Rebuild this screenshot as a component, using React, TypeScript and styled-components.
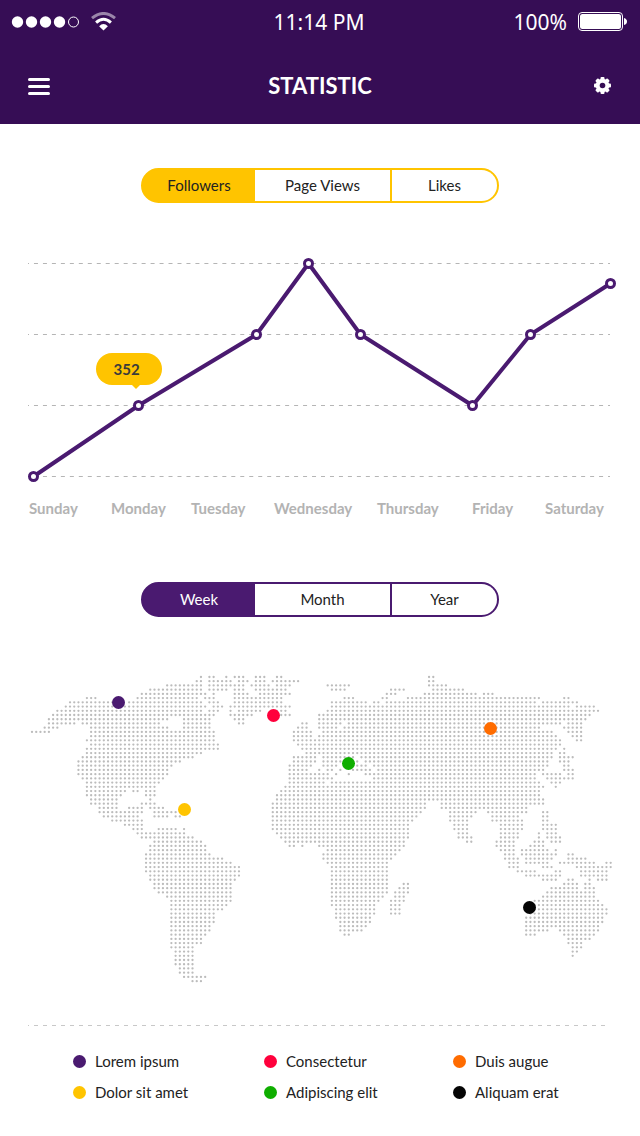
import React, { useState } from "react";
import styled, { createGlobalStyle } from "styled-components";

const color = {
  header: "#360d55",
  purple: "#4a1a70",
  yellow: "#ffc400",
  red: "#ff003c",
  green: "#0fae00",
  orange: "#ff6c00",
  black: "#050505",
  text: "#222222",
  muted: "#b3b3b3",
};

const GlobalStyle = createGlobalStyle`
  *, *::before, *::after { box-sizing: border-box; }
  body {
    margin: 0;
    background: #fff;
    color: ${color.text};
    font-family: Lato, "Open Sans", sans-serif;
    font-size: 15px;
    line-height: 20px;
  }
`;

const Page = styled.div`
  display: flex;
  flex-direction: column;
  padding-bottom: 34px;
`;

const Header = styled.header`
  background: ${color.header};
  color: #fff;
`;

const StatusBar = styled.div`
  display: grid;
  grid-template-columns: 1fr auto 1fr;
  align-items: center;
  height: 43px;
  padding: 0 13px 0 11px;
  font-family: "Noto Sans", "Open Sans", sans-serif;
  font-size: 21px;
  line-height: 28px;
`;

const StatusGroup = styled.div<{ $end?: boolean }>`
  display: flex;
  align-items: center;
  justify-content: ${(p) => (p.$end ? "flex-end" : "flex-start")};
  gap: 11px;
`;

const NavBar = styled.nav`
  display: grid;
  grid-template-columns: 1fr auto 1fr;
  align-items: center;
  height: 81px;
  padding: 5px 28px 0;
`;

const Title = styled.h1`
  margin: 0;
  font-size: 22px;
  line-height: 28px;
  font-weight: 700;
`;

const IconButton = styled.button<{ $end?: boolean }>`
  display: flex;
  justify-self: ${(p) => (p.$end ? "end" : "start")};
  padding: 0;
  border: 0;
  background: none;
  color: inherit;
  cursor: pointer;
`;

const Segments = styled.div<{ $tone: string }>`
  display: grid;
  grid-template-columns: 112fr 137fr 105fr;
  align-self: center;
  width: 358px;
  max-width: 100%;
  height: 35px;
  border: 2px solid ${(p) => p.$tone};
  border-radius: 18px;
  background: ${(p) => p.$tone};
  overflow: hidden;
`;

const Segment = styled.button<{ $tone: string; $ink: string }>`
  padding: 0 0 2px;
  border: 0;
  border-right: 2px solid ${(p) => p.$tone};
  background: #fff;
  color: ${color.text};
  font: inherit;
  cursor: pointer;
  &:last-child { border-right: 0; }
  &[aria-pressed="true"] {
    border-right: 0;
    background: ${(p) => p.$tone};
    color: ${(p) => p.$ink};
  }
`;

const ChartSection = styled.section`
  display: flex;
  flex-direction: column;
  padding: 44px 24px 0;
`;

const ChartArea = styled.div`
  position: relative;
  margin-top: 53px;
`;

const Drawing = styled.svg`
  display: block;
  width: 100%;
  height: auto;
`;

const Tooltip = styled.div`
  position: absolute;
  left: 18%;
  bottom: 99px;
  width: 66px;
  height: 32px;
  margin-left: -35px;
  padding-right: 4px;
  border-radius: 16px;
  background: ${color.yellow};
  color: #3b3b3b;
  font-weight: 700;
  line-height: 32px;
  text-align: center;
  &::after {
    content: "";
    position: absolute;
    left: 36px;
    top: 100%;
    border: 4px solid transparent;
    border-top-color: ${color.yellow};
    border-bottom: 0;
  }
`;

const Days = styled.ol`
  display: grid;
  grid-template-columns: 82fr 80fr 83fr 103fr 95fr 73fr 71fr;
  margin: 14px 0 0;
  padding: 0 0 0 5px;
  list-style: none;
  color: ${color.muted};
  font-weight: 700;
`;

const MapSection = styled.section`
  display: flex;
  flex-direction: column;
  padding: 64px 28px 0;
`;

const MapArea = styled.div`
  margin-top: 57px;
`;

const Divider = styled.hr`
  align-self: stretch;
  height: 1px;
  margin: 40px 2px 0 0;
  border: 0;
  background: repeating-linear-gradient(90deg, #c8c8c8 0 1px, transparent 1px 6px, #c8c8c8 6px 9px);
`;

const Legend = styled.ul`
  display: grid;
  grid-template-columns: 191fr 189fr 159fr;
  row-gap: 11px;
  margin: 25px 0 0;
  padding: 0 0 0 45px;
  list-style: none;
`;

const LegendItem = styled.li<{ $tone: string }>`
  display: flex;
  align-items: center;
  gap: 9px;
  &::before {
    content: "";
    width: 13px;
    height: 13px;
    border-radius: 50%;
    background: ${(p) => p.$tone};
  }
`;

function SegmentedControl({ label, options, tone, ink }: { label: string; options: string[]; tone: string; ink: string }) {
  const [active, setActive] = useState(options[0]);
  return (
    <Segments role="group" aria-label={label} $tone={tone}>
      {options.map((o) => (
        <Segment key={o} type="button" $tone={tone} $ink={ink} aria-pressed={o === active} onClick={() => setActive(o)}>
          {o}
        </Segment>
      ))}
    </Segments>
  );
}

const points = [
  [33.5, 476.5],
  [138.5, 405.5],
  [256.5, 334.5],
  [308.5, 263.5],
  [360.5, 334.5],
  [472.5, 405.5],
  [530.5, 334.5],
  [610.5, 283.5],
];

function LineChart() {
  return (
    <Drawing viewBox="24 256 592 228" role="img" aria-label="Followers per day">
      {[263.5, 334.5, 405.5, 476.5].map((y) => (
        <line key={y} x1="28" x2="610" y1={y} y2={y} stroke="#b5b5b5" strokeDasharray="4 4.970" strokeDashoffset="3" />
      ))}
      <polyline points={points.map((p) => p.join(",")).join(" ")} fill="none" stroke={color.purple} strokeWidth="4" />
      {points.map(([x, y]) => (
        <circle key={x} cx={x} cy={y} r="4" fill="#fff" stroke={color.purple} strokeWidth="3" />
      ))}
    </Drawing>
  );
}

// Land cells of the dotted world map: one string per row, each a list of column ranges.
const land = [
  "40,42-43,46,48-50,53-55,58-59,94-95",
  "39-40,42-47,49-51,53-55,57-63,94-95",
  "32-40,42-44,45-50,52-56,58-61,70-75,94-98",
  "28-40,42-46,48-50,53-60,71-74,85-88,95-102",
  "26-41,43,48-51,54-61,84-86,93-105,107-109",
  "13-15,25-39,41-43,48-59,74-76,83-84,89-120,126-127",
  "9-20,23-40,42-44,48-59,71-79,81-82,84-119,121-129",
  "8-41,43-45,47-61,71-127,129-133",
  "6-40,42-44,47,49-54,57-60,70-126,127-134",
  "5-43,47-52,58-61,68-132",
  "4-32,36-42,48-50,68-131",
  "4-10,12-30,36-42,49-50,64-65,68-73,75-125,127-130",
  "3-6,14-32,36-42,63-65,68-72,74-120,126-130",
  "0-4,14-43,62-66,69-123,127-130",
  "14-43,62-66,68-124,128-130",
  "13-43,62-125,129-130",
  "14-44,63-125",
  "13-44,64-124,126",
  "13-40,65-123,125-126",
  "12-38,62-67,69-76,78-123,125-128",
  "11-35,62-67,69-77,79-122,125-127",
  "11-33,61-66,69-72,75-79,81-122,126-127",
  "11-32,61-65,68,70-71,73,76-80,82-121,126-128",
  "11-32,61-70,72,75,79-119,121-125,127-128",
  "12-31,61-71,81-119,122-128",
  "13-30,61-69,71-120,123-125",
  "13-29,60-121,124",
  "13-22,24-25,27-29,59-120",
  "13-21,27-29,58-120",
  "14-20,28,58-121",
  "14-20,26-29,57-93,97-121",
  "16-20,23-26,28-31,57-93,97-117",
  "16-26,29-34,57-92,99-105,108-117,121-122",
  "17-25,29-32,34-35,57-91,99-104,109-115,121-122",
  "19-26,57-90,99-103,109-116,121-122",
  "22-26,57-89,100-103,111-116,121-124",
  "24-26,30-34,36,57-89,100-103,111-116,121-124",
  "25-36,58-89,101-103,111-115,120,122-124",
  "26-38,59-89,101-104,111-115,120,122-125",
  "29-40,60-88,103-104,110-114,119-121,123-125",
  "28-41,61-62,64,68-88,110-114,118-121",
  "28-41,70-87,111-114,116-122,124",
  "27-42,69-86,112-114,116-124,127-128",
  "27-45,69-85,112-115,117-123,127-131",
  "27-47,70-84,113-115,117-122,125-133,136-137",
  "27-49,71-84,113-115,121-123,129-134,135-137",
  "27-49,71-84,115-119,124-125,130-136",
  "28-49,71-84,117-125,130-136",
  "28-48,71-84,121-124,127-128,132,134-136",
  "29-47,71-84,88-89,126-129,131-132",
  "29-47,71-84,87-89,123-129,131-133",
  "30-47,71-84,86-89,122-133",
  "32-47,71-83,86-88,121-133",
  "33-47,71-82,85-88,119-134",
  "33-46,71-81,85-87,118-135",
  "33-45,72-81,85-87,118-136",
  "33-43,72-81,85-87,118-136",
  "33-43,72-80,117-135",
  "33-43,73-80,117-135",
  "33-42,73-79,117-134",
  "33-42,73-78,117-122,125-134",
  "33-41,74-75,117-119,126-133",
  "33-40,127-132",
  "33-40,127-130",
  "33-38,128-130",
  "34-38,128-129",
  "34-38,128",
  "34-38",
  "34-38",
  "35-38",
  "35-38",
  "36-41",
  "38-40",
];

const pitch = 4.224;

const landPath = land
  .map((row, r) =>
    row
      .split(",")
      .map((range) => {
        const [from, to = from] = range.split("-").map(Number);
        let d = "";
        for (let c = from; c <= to; c++) {
          d += `M${(32 + c * pitch).toFixed(2)} ${(677 + r * pitch).toFixed(2)}h0`;
        }
        return d;
      })
      .join("")
  )
  .join("");

const pins = [
  { x: 118.5, y: 702.5, tone: color.purple, name: "Lorem ipsum" },
  { x: 273.5, y: 715.5, tone: color.red, name: "Consectetur" },
  { x: 490.5, y: 728.5, tone: color.orange, name: "Duis augue" },
  { x: 184.5, y: 809.5, tone: color.yellow, name: "Dolor sit amet" },
  { x: 348.5, y: 763.5, tone: color.green, name: "Adipiscing elit" },
  { x: 529.5, y: 907.5, tone: color.black, name: "Aliquam erat" },
];

function WorldMap() {
  return (
    <Drawing viewBox="28 674 584 311" role="img" aria-label="World map">
      <path d={landPath} stroke="#bcbcbc" strokeWidth="2.3" strokeLinecap="round" />
      {pins.map((p) => (
        <circle key={p.name} cx={p.x} cy={p.y} r="6.5" fill={p.tone} />
      ))}
    </Drawing>
  );
}

function SignalIcon() {
  return (
    <svg width="69" height="14" viewBox="0 0 69 14" fill="#fff" aria-hidden="true">
      {[6, 20, 34, 48].map((x) => (
        <circle key={x} cx={x + 0.5} cy="7" r="5.7" />
      ))}
      <circle cx="62.5" cy="7" r="5" fill="none" stroke="#fff" />
    </svg>
  );
}

function WifiIcon() {
  return (
    <svg width="25" height="19" viewBox="0.5 0 25 19" fill="none" stroke="#fff" strokeWidth="3" aria-hidden="true">
      <path d="M1.5 6.2Q13-3.2 24.5 6.2" opacity=".5" />
      <path d="M5.6 10.6Q13 4 20.4 10.6" />
      <path d="M8.6 14.2Q13 10 17.4 14.2L13 18.4Z" fill="#fff" stroke="none" />
    </svg>
  );
}

function BatteryIcon() {
  return (
    <svg width="49" height="19" viewBox="0 0 49 19" fill="#fff" aria-hidden="true">
      <rect x=".5" y=".5" width="44" height="18" rx="3.5" fill="none" stroke="#fff" />
      <rect x="2" y="2" width="41" height="15" rx="2.5" />
      <path d="M46 6q3 1 3 3.500t-3 3.500z" />
    </svg>
  );
}

function MenuIcon() {
  return (
    <svg width="22" height="18" viewBox="0 0 22 18" stroke="#fff" strokeWidth="3" strokeLinecap="round" aria-hidden="true">
      <path d="M1.500 2.500h19M1.500 9.500h19M1.500 16.500h19" />
    </svg>
  );
}

function GearIcon() {
  return (
    <svg width="18" height="18" viewBox="-8.500 -8.500 18 18" aria-hidden="true">
      {[0, 45, 90, 135].map((a) => (
        <rect key={a} x="-2" y="-8.500" width="4" height="17" rx="1" fill="#fff" transform={`rotate(${a})`} />
      ))}
      <circle r="4.800" fill="none" stroke="#fff" strokeWidth="4" />
      <circle r="2.800" fill={color.header} />
    </svg>
  );
}

const days = ["Sunday", "Monday", "Tuesday", "Wednesday", "Thursday", "Friday", "Saturday"];

export default function App() {
  return (
    <Page>
      <GlobalStyle />
      <Header>
        <StatusBar>
          <StatusGroup>
            <SignalIcon />
            <WifiIcon />
          </StatusGroup>
          <span>11:14 PM</span>
          <StatusGroup $end>
            <span>100%</span>
            <BatteryIcon />
          </StatusGroup>
        </StatusBar>
        <NavBar>
          <IconButton type="button" aria-label="Menu">
            <MenuIcon />
          </IconButton>
          <Title>STATISTIC</Title>
          <IconButton type="button" aria-label="Settings" $end>
            <GearIcon />
          </IconButton>
        </NavBar>
      </Header>
      <main>
        <ChartSection>
          <SegmentedControl label="Metric" options={["Followers", "Page Views", "Likes"]} tone={color.yellow} ink={color.text} />
          <ChartArea>
            <LineChart />
            <Tooltip>352</Tooltip>
          </ChartArea>
          <Days>
            {days.map((d) => (
              <li key={d}>{d}</li>
            ))}
          </Days>
        </ChartSection>
        <MapSection>
          <SegmentedControl label="Period" options={["Week", "Month", "Year"]} tone={color.purple} ink="#fff" />
          <MapArea>
            <WorldMap />
          </MapArea>
          <Divider />
          <Legend>
            {pins.map((p) => (
              <LegendItem key={p.name} $tone={p.tone}>
                {p.name}
              </LegendItem>
            ))}
          </Legend>
        </MapSection>
      </main>
    </Page>
  );
}
